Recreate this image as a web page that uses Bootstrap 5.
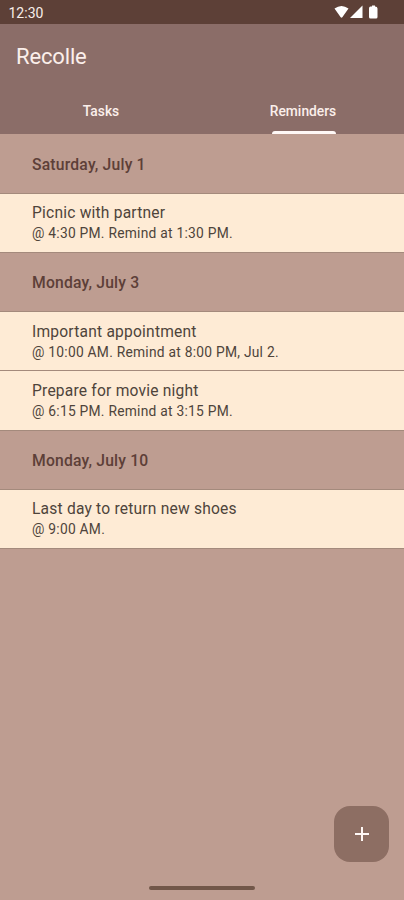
<!DOCTYPE html>
<html lang="en">
<head>
<meta charset="utf-8">
<meta name="viewport" content="width=device-width, initial-scale=1">
<title>Recolle</title>
<link href="https://cdn.jsdelivr.net/npm/bootstrap@5.3.0/dist/css/bootstrap.min.css" rel="stylesheet">
<style>
body{font-family:Roboto,"Liberation Sans",sans-serif;background:#be9d91;color:#4e443b;height:900px;overflow:hidden}
.status{height:24px;background:#5d4037;color:#f8eee9;font-size:14px;line-height:24px;padding:1px 24px 0 8.5px}
.top{height:110px;background:#8b6d68;color:#fbefeb}
.brand{font-size:22px;line-height:26px;padding:20px 16px 0;height:64px;letter-spacing:-.15px}
.tab{height:46px;font-size:13.8px;line-height:16px;font-weight:500;padding-top:15px;color:inherit;text-decoration:none}
.tab-line{width:64px;height:3px;border-radius:3px 3px 0 0;background:#fff8f6;margin-left:1px}
.agenda{padding-top:.6px}
.entry{height:59.2px;padding:0 32px;border-bottom:1px solid #a48a7c}
.day{font-size:15.7px;font-weight:500;color:#5d3f38;line-height:20px;padding-top:20.5px;letter-spacing:.2px}
.item{background:#feebd5;padding-top:9.6px}
.name{font-size:15.6px;line-height:20px;letter-spacing:.2px}
.when{font-size:13.8px;line-height:20px;letter-spacing:.25px}
.fab{width:55px;height:56px;border-radius:16px;background:#8d6e63;margin-right:15px;margin-bottom:24px;border:0}
.home{width:106px;height:4px;border-radius:2px;background:#725749;margin-bottom:10px}
</style>
<script src="https://cdn.jsdelivr.net/npm/bootstrap@5.3.0/dist/js/bootstrap.bundle.min.js"></script>
</head>
<body class="d-flex flex-column">
<div class="status d-flex justify-content-between align-items-start flex-shrink-0">
  <span>12:30</span>
  <svg width="46" height="14" viewBox="0 0 46 14" fill="#fff" class="mt-1" aria-hidden="true">
    <path d="M.5 3.5Q7.500-1.500 14.500 3.500L8.500 12Q7.500 13.500 6.500 12Z"/>
    <path d="M28.500 .500V13H16Z"/>
    <path d="M36.500 1.500H38V.500H41V1.500Q43.500 1.500 43.500 3.500V12Q43.500 13.500 42 13.500H36.500Q35 13.500 35 12V3.500Q35 1.500 36.500 1.500Z"/>
  </svg>
</div>
<header class="top flex-shrink-0">
  <div class="brand">Recolle</div>
  <nav class="d-flex">
    <a href="#" class="tab w-50 text-center">Tasks</a>
    <a href="#" class="tab w-50 d-flex flex-column align-items-center justify-content-between" aria-current="page"><span>Reminders</span><span class="tab-line"></span></a>
  </nav>
</header>
<main class="agenda flex-shrink-0">
  <div class="entry day">Saturday, July 1</div>
  <div class="entry item"><div class="name">Picnic with partner</div><div class="when">@ 4:30 PM. Remind at 1:30 PM.</div></div>
  <div class="entry day">Monday, July 3</div>
  <div class="entry item"><div class="name">Important appointment</div><div class="when">@ 10:00 AM. Remind at 8:00 PM, Jul 2.</div></div>
  <div class="entry item"><div class="name">Prepare for movie night</div><div class="when">@ 6:15 PM. Remind at 3:15 PM.</div></div>
  <div class="entry day">Monday, July 10</div>
  <div class="entry item"><div class="name">Last day to return new shoes</div><div class="when">@ 9:00 AM.</div></div>
</main>
<button class="fab d-flex align-items-center justify-content-center mt-auto ms-auto flex-shrink-0 p-0" aria-label="Add">
  <svg width="16" height="16" viewBox="0 0 16 16" stroke="#fff8f6" stroke-width="2" aria-hidden="true"><path d="M8 1V15M1 8H15"/></svg>
</button>
<div class="home mx-auto flex-shrink-0"></div>
</body>
</html>
